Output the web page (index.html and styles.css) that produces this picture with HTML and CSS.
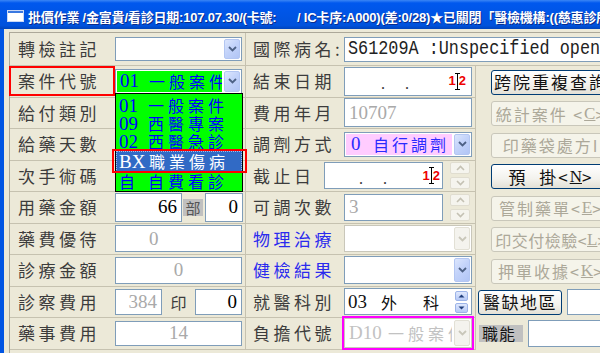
FILE: index.html
```html
<!DOCTYPE html>
<html lang="zh-Hant">
<head>
<meta charset="UTF-8">
<title>批價作業</title>
<link rel="stylesheet" href="styles.css">
</head>
<body>
<div class="window">
  <div class="titlebar">
    <svg class="app-icon" width="17" height="12" viewBox="0 0 17 12"><rect x="0.5" y="0.5" width="16" height="11" fill="#fff" stroke="#c9d8f5"/><rect x="1" y="1" width="15" height="2" fill="#3a78e0"/></svg>
    <span class="title">批價作業 /金富貴/看診日期:107.07.30/(卡號:&nbsp;&nbsp;&nbsp;&nbsp;&nbsp; / IC卡序:A000)(差:0/28)★已關閉「醫檢機構:((慈惠診所))」</span>
  </div>
  <div class="content">
    <div class="panel">
      <div class="grid">
        <!-- 1 -->
        <div class="cell left">
          <span class="label">轉檢註記</span>
          <div class="combo h24"><div class="field"></div><span class="drop"><svg width="9" height="6" viewBox="0 0 9 6"><path d="M1 1l3.5 3.5L8 1" fill="none" stroke="currentColor" stroke-width="1.8"/></svg></span></div>
        </div>
        <div class="cell mid wide">
          <span class="label">國際病名:</span>
          <div class="box icd-box"><span class="icd">S61209A :Unspecified open wound</span></div>
        </div>

        <!-- 2 -->
        <div class="cell left">
          <span class="label flag">案件代號</span>
          <div class="combo h25 case">
            <div class="field green"><span class="code">01</span><span class="name">一般案件</span></div>
            <span class="drop"><svg width="9" height="6" viewBox="0 0 9 6"><path d="M1 1l3.5 3.5L8 1" fill="none" stroke="currentColor" stroke-width="1.8"/></svg></span>
            <ul class="dropdown">
              <li class="opt o1"><span class="code">01</span><span class="name">一般案件</span></li>
              <li class="opt"><span class="code">09</span><span class="name">西醫專案</span></li>
              <li class="opt"><span class="code">02</span><span class="name">西醫急診</span></li>
              <li class="opt sel"><span class="code">BX</span><span class="name">職業傷病</span></li>
              <li class="opt o5"><span class="code cjk">自</span><span class="name">自費看診</span></li>
            </ul>
          </div>
        </div>
        <div class="cell mid">
          <span class="label">結束日期</span>
          <div class="box h29 date"><span class="dots">.&nbsp;&nbsp;&nbsp;&nbsp;&nbsp;.</span><span class="mark"><b>1</b><i class="ibeam"></i><b>2</b></span></div>
        </div>
        <div class="side"><button class="xbtn">跨院重複查詢</button></div>

        <!-- 3 -->
        <div class="cell left"><span class="label">給付類別</span></div>
        <div class="cell mid">
          <span class="label">費用年月</span>
          <div class="box h29 num gray">10707</div>
        </div>
        <div class="side"><button class="xbtn off">統計案件 &lt;<u>C</u>&gt;</button></div>

        <!-- 4 -->
        <div class="cell left"><span class="label">給藥天數</span></div>
        <div class="cell mid">
          <span class="label">調劑方式</span>
          <div class="combo h25"><div class="field pink"><span class="code">0</span><span class="name">自行調劑</span></div><span class="drop"><svg width="9" height="6" viewBox="0 0 9 6"><path d="M1 1l3.5 3.5L8 1" fill="none" stroke="currentColor" stroke-width="1.8"/></svg></span></div>
        </div>
        <div class="side"><button class="xbtn off">印藥袋處方I</button></div>

        <!-- 5 -->
        <div class="cell left"><span class="label">次手術碼</span></div>
        <div class="cell mid">
          <span class="label short">截止日</span>
          <div class="box h27 date narrow"><span class="dots">.&nbsp;&nbsp;&nbsp;&nbsp;&nbsp;.</span><span class="mark"><b>1</b><i class="ibeam"></i><b>2</b></span></div>
          <div class="spin"><i><svg width="9" height="6" viewBox="0 0 9 6"><path d="M1 5l3.5-3.5L8 5" fill="none" stroke="currentColor" stroke-width="1.6"/></svg></i><i><svg width="9" height="6" viewBox="0 0 9 6"><path d="M1 1l3.5 3.5L8 1" fill="none" stroke="currentColor" stroke-width="1.6"/></svg></i></div>
        </div>
        <div class="side"><button class="xbtn">預&nbsp;&nbsp;掛&lt;<u>N</u>&gt;</button></div>

        <!-- 6 -->
        <div class="cell left">
          <span class="label">用藥金額</span>
          <div class="box h29 num right w67">66</div>
          <span class="tag">部</span>
          <div class="box h29 num right w38">0</div>
        </div>
        <div class="cell mid">
          <span class="label">可調次數</span>
          <div class="box h27 num gray w99">3</div>
          <div class="spin"><i><svg width="9" height="6" viewBox="0 0 9 6"><path d="M1 5l3.5-3.5L8 5" fill="none" stroke="currentColor" stroke-width="1.6"/></svg></i><i><svg width="9" height="6" viewBox="0 0 9 6"><path d="M1 1l3.5 3.5L8 1" fill="none" stroke="currentColor" stroke-width="1.6"/></svg></i></div>
        </div>
        <div class="side"><button class="xbtn off">管制藥單&lt;<u>E</u>&gt;</button></div>

        <!-- 7 -->
        <div class="cell left">
          <span class="label">藥費優待</span>
          <div class="box h27 num gray indent">0</div>
        </div>
        <div class="cell mid">
          <span class="label blue">物理治療</span>
          <div class="combo h27 disabled"><div class="field"></div><span class="drop"><svg width="9" height="6" viewBox="0 0 9 6"><path d="M1 1l3.5 3.5L8 1" fill="none" stroke="currentColor" stroke-width="1.8"/></svg></span></div>
        </div>
        <div class="side"><button class="xbtn off tight">印交付檢驗&lt;<u>L</u>&gt;</button></div>

        <!-- 8 -->
        <div class="cell left">
          <span class="label">診療金額</span>
          <div class="box h27 num gray center">0</div>
        </div>
        <div class="cell mid">
          <span class="label blue">健檢結果</span>
          <div class="combo h28"><div class="field"></div><span class="drop"><svg width="9" height="6" viewBox="0 0 9 6"><path d="M1 1l3.5 3.5L8 1" fill="none" stroke="currentColor" stroke-width="1.8"/></svg></span></div>
        </div>
        <div class="side"><button class="xbtn off">押單收據&lt;<u>K</u>&gt;</button></div>

        <!-- 9 -->
        <div class="cell left">
          <span class="label">診察費用</span>
          <div class="box h26 num gray right w47">384</div>
          <span class="seal">印</span>
          <div class="box h26 num right w47">0</div>
        </div>
        <div class="cell mid">
          <span class="label">就醫科別</span>
          <div class="box h27 dept"><span class="code">03</span><span class="ch">外</span><span class="ch far">科</span>
            <div class="mini"><i><svg width="7" height="4" viewBox="0 0 7 4"><path d="M0.5 3.5L3.5 0.5 6.5 3.5z" fill="currentColor"/></svg></i><i><svg width="7" height="4" viewBox="0 0 7 4"><path d="M0.5 0.5L3.5 3.5 6.5 0.5z" fill="currentColor"/></svg></i></div>
          </div>
        </div>
        <div class="side bottom">
          <button class="xbtn area">醫缺地區</button>
          <div class="box h26 stub"></div>
        </div>

        <!-- 10 -->
        <div class="cell left">
          <span class="label">藥事費用</span>
          <div class="box h25 num gray center">14</div>
        </div>
        <div class="cell mid">
          <span class="label">負擔代號</span>
          <div class="hilite">
            <div class="combo h30 disabled"><div class="field faded"><span class="code">D10</span><span class="name">一般案件</span></div><span class="drop"><svg width="9" height="6" viewBox="0 0 9 6"><path d="M1 1l3.5 3.5L8 1" fill="none" stroke="currentColor" stroke-width="1.8"/></svg></span></div>
          </div>
        </div>
        <div class="side bottom">
          <span class="role">職能</span>
          <div class="box h27 stub2"></div>
        </div>
      </div>
    </div>
  </div>
</div>
</body>
</html>
```

FILE: styles.css
```css
* {
    margin: 0;
    padding: 0;
    box-sizing: border-box;
}

html,
body {
    width: 600px;
    height: 353px;
    overflow: hidden;
}

body {
    background: #ECE9D8;
    font-family: "Noto Sans CJK TC", sans-serif;
}

.window {
    width: 600px;
    height: 353px;
    overflow: hidden;
}

/* title bar */
.titlebar {
    height: 29px;
    display: flex;
    align-items: center;
    padding: 3px 0 0 7px;
    background: linear-gradient(#3b86f5 0, #0058ee 3px, #0055e5 50%, #0052dc 88%, #0044bb 100%);
    color: #fff;
    font: bold 13px "Liberation Sans", "Noto Sans CJK TC", sans-serif;
    white-space: nowrap;
    overflow: hidden;
    text-shadow: 1px 1px 0 #0a2c8c;
}

.app-icon {
    flex: none;
    margin-right: 4px;
}

.title {
    letter-spacing: -0.2px;
}

.content {
    height: 324px;
    border-left: 4px solid #0055e3;
    padding: 3px 0 0 5px;
}

.panel {
    height: 100%;
    border-top: 1px solid #aca899;
    border-left: 1px solid #aca899;
}

.grid {
    display: grid;
    grid-template-columns: 236px 230px 125px;
    grid-template-rows: 33px repeat(9, 31.5px);
}

.cell {
    display: flex;
    align-items: center;
    border-right: 1px solid #c6c2b0;
    border-bottom: 1px solid #c6c2b0;
}

.cell.wide {
    grid-column: span 2;
    border-right: 0;
    overflow: hidden;
}

.side {
    display: flex;
    align-items: center;
    padding: 1px 0 0 15px;
    overflow: hidden;
}

.side.bottom {
    padding: 0 0 0 2px;
}

/* labels */
.label {
    flex: none;
    width: 105px;
    padding-left: 8px;
    font-size: 17px;
    line-height: 20px;
    letter-spacing: 3.5px;
    color: #3c3c3c;
    white-space: nowrap;
}

.mid .label {
    width: 98px;
    padding-left: 7px;
}

.mid .label.short {
    width: 78px;
}

.label.blue {
    color: #2a2aee;
}

.label.flag {
    width: 106px;
    height: 30px;
    margin-left: -1px;
    padding-left: 7px;
    display: flex;
    align-items: center;
    border: 2px solid #ff0000;
}

/* text boxes */
.box {
    flex: none;
    width: 127px;
    display: flex;
    align-items: center;
    background: #fff;
    border: 1px solid #7f9db9;
    overflow: hidden;
    white-space: nowrap;
}

.mid .box {
    width: 128px;
}

.h24 { height: 24px; }
.h25 { height: 25px; }
.h26 { height: 26px; }
.h27 { height: 27px; }
.h28 { height: 28px; }
.h29 { height: 29px; }
.h30 { height: 30px; }

.num {
    font-family: "Liberation Serif", serif;
    font-size: 19px;
    line-height: 22px;
    color: #000;
    padding: 0 4px;
}

.num.gray {
    color: #a9a9a9;
}

.num.right {
    justify-content: flex-end;
}

.num.center {
    justify-content: center;
}

.num.indent {
    padding-left: 33px;
}

.box.w67 { width: 67px; }
.box.w38 { width: 38px; }
.box.w47 { width: 47px; }
.mid .box.w99 { width: 99px; }

.tag {
    flex: none;
    width: 20px;
    height: 17px;
    margin: 0 2px 0 1px;
    background: #c0c0c0;
    color: #555;
    font-size: 15px;
    line-height: 17px;
    text-align: center;
}

.seal {
    flex: none;
    width: 33px;
    text-align: center;
    font-size: 16px;
    line-height: 20px;
    color: #3c3c3c;
}

.icd-box {
    width: 262px !important;
    height: 25px;
    padding-left: 3px;
}

.icd {
    display: inline-block;
    font-family: "Liberation Mono", monospace;
    font-size: 20px;
    line-height: 22px;
    color: #222;
    transform: scaleX(0.84);
    transform-origin: left center;
}

/* date boxes */
.date {
    position: relative;
    font-family: "Liberation Serif", serif;
}

.date .dots {
    margin-left: 36px;
    font-size: 16px;
    line-height: 18px;
    color: #333;
    padding-top: 6px;
}

.date.narrow {
    width: 119px !important;
}

.date.narrow .dots {
    margin-left: 34px;
}

.mark {
    position: absolute;
    right: 5px;
    top: 50%;
    margin-top: -8px;
    height: 16px;
    display: flex;
    align-items: center;
    font: bold 13px/14px "Liberation Sans", sans-serif;
    color: #ee0000;
}

.date.narrow .mark {
    right: 2px;
}

.ibeam {
    width: 5px;
    height: 17px;
    margin: 0 -1px;
    background:
        linear-gradient(90deg, transparent 2px, #000 2px, #000 3px, transparent 3px),
        linear-gradient(#000, #000) top / 5px 1px no-repeat,
        linear-gradient(#000, #000) bottom / 5px 1px no-repeat;
}

/* combo boxes */
.combo {
    position: relative;
    flex: none;
    width: 127px;
    display: flex;
    padding: 1px;
    background: #fff;
    border: 1px solid #7f9db9;
}

.mid .combo {
    width: 128px;
}

.combo .field {
    flex: 1;
    display: flex;
    align-items: center;
    overflow: hidden;
    white-space: nowrap;
    margin-right: 2px;
    line-height: 20px;
}

.field .code {
    flex: none;
    width: 32px;
    padding-left: 3px;
    font-family: "Liberation Serif", serif;
    font-size: 19px;
}

.field .name {
    font-size: 16px;
    letter-spacing: 4px;
    margin-right: -4px;
}

.field.green {
    background: #00ff00;
    color: #0000ff;
}

.field.pink {
    background: #ffccff;
    color: #2a2aff;
}

.field.pink .code {
    width: 27px;
    padding-left: 5px;
}

.field.pink .name {
    letter-spacing: 3px;
}

.field.faded {
    color: #c2c2c2;
}

.field.faded .code {
    width: 42px;
}

.field.faded .name {
    letter-spacing: 4px;
}

.drop {
    flex: none;
    width: 16px;
    display: flex;
    align-items: center;
    justify-content: center;
    border: 1px solid #b3c6f2;
    border-radius: 2px;
    background: linear-gradient(135deg, #dce6fd 0%, #c3d3fa 45%, #b1c5f5 100%);
    color: #4d6185;
}

.combo.disabled {
    border-color: #c9c7ba;
}

.combo.disabled .drop {
    border-color: #e2e0d5;
    background: #f4f3ee;
    color: #c9c7ba;
}

/* open list */
.dropdown {
    position: absolute;
    left: -1px;
    top: 100%;
    width: 128px;
    padding-top: 2px;
    list-style: none;
    background: #00ff00;
    border: 1px solid #000;
    z-index: 5;
}

.opt {
    position: relative;
    height: 18px;
    display: flex;
    align-items: center;
    color: #0000ff;
    white-space: nowrap;
    line-height: 17px;
}

.opt.o1,
.opt.o5 {
    height: 19px;
}

.opt .code {
    flex: none;
    width: 32px;
    padding-left: 3px;
    font-family: "Liberation Serif", serif;
    font-size: 19px;
}

.opt .code.cjk {
    font-family: "Noto Sans CJK TC", sans-serif;
    font-size: 16px;
}

.opt .name {
    font-size: 16px;
    letter-spacing: 4px;
    margin-right: -4px;
}

.opt.sel {
    height: 21px;
    background: #316ac5;
    color: #fff;
    border: 1px dotted #a8bde6;
}

.opt.sel .code {
    padding-left: 2px;
}

.opt.sel::after {
    content: "";
    position: absolute;
    top: -3px;
    bottom: -2px;
    left: -5px;
    right: -6px;
    border: 2px solid #ff0000;
}

/* spinners */
.spin {
    flex: none;
    width: 20px;
    height: 27px;
    margin-left: 7px;
    display: flex;
    flex-direction: column;
    justify-content: space-between;
}

.spin i {
    height: 12px;
    display: flex;
    align-items: center;
    justify-content: center;
    border: 1px solid #e0ddd0;
    border-radius: 2px;
    background: #f5f4ee;
    color: #c4c1b3;
}

.dept {
    position: relative;
    padding-left: 3px;
    font-size: 16px;
    line-height: 20px;
    color: #111;
}

.dept .code {
    flex: none;
    width: 33px;
    font-family: "Liberation Serif", serif;
    font-size: 19px;
}

.dept .far {
    margin-left: 26px;
}

.mini {
    position: absolute;
    right: 3px;
    top: 2px;
    width: 13px;
    display: flex;
    flex-direction: column;
    gap: 2px;
}

.mini i {
    height: 10px;
    display: flex;
    align-items: center;
    justify-content: center;
    border: 1px solid #9db4e8;
    border-radius: 2px;
    background: linear-gradient(#dfe8fd, #b6c9f6);
    color: #1f3d7a;
}

.hilite {
    flex: none;
    margin-left: -2px;
    border: 2px solid #ff00ff;
}

.hilite .combo {
    width: 128px;
}

/* buttons */
.xbtn {
    flex: none;
    width: 120px;
    height: 25px;
    display: flex;
    align-items: center;
    justify-content: center;
    border: 1px solid #003c74;
    border-radius: 3px;
    background: linear-gradient(#ffffff, #f3f2ed 60%, #e3e0d6);
    font-family: "Noto Sans CJK TC", sans-serif;
    font-size: 16px;
    line-height: 20px;
    letter-spacing: 2px;
    white-space: nowrap;
    color: #111;
}

.xbtn:first-child:not(.area):not(.off) {
    font-size: 17px;
}

.xbtn.off {
    border-color: #c9c7ba;
    background: #f5f4ea;
    color: #aca899;
}

.xbtn.tight {
    letter-spacing: 0.5px;
}

.xbtn u {
    font-family: "Liberation Serif", serif;
    font-size: 17px;
    letter-spacing: 0;
}

.xbtn.area {
    width: 84px;
    font-size: 17px;
    letter-spacing: 1.5px;
}

.stub {
    width: 60px;
    margin-left: 5px;
}

.role {
    flex: none;
    width: 44px;
    height: 17px;
    margin-left: 1px;
    padding-left: 3px;
    background: #c0c0c0;
    font-size: 16px;
    line-height: 17px;
    letter-spacing: 1px;
    color: #111;
}

.stub2 {
    width: 90px;
    margin-left: 5px;
}
```
